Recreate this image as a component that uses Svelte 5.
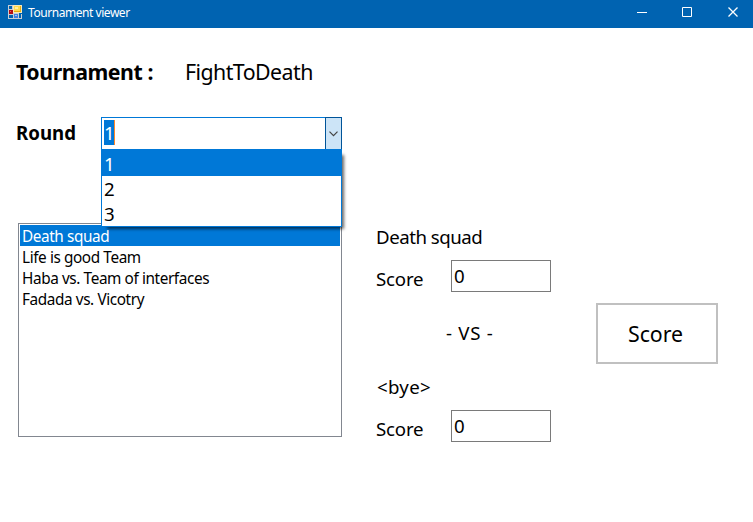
<script>
  const rounds = ['1', '2', '3'];
  const matchups = ['Death squad', 'Life is good Team', 'Haba vs. Team of interfaces', 'Fadada vs. Vicotry'];
  const selected = 0;
</script>

<div class="window">
  <header>
    <svg class="logo" width="16" height="16" viewBox="0 0 16 16" shape-rendering="crispEdges">
      <path fill="none" stroke="#c9ccd2" d="M1.5 5.500V1.500H5.500V5.500M1.500 5.500H6.500V10.500H1.500ZM1.500 10.500V14.500H6.500M6.500 9.500H11.500V14.500H6.500ZM11.500 14.500H14.500V9.500" />
      <path fill="#f6e9b8" d="M6 1h9v8h-9z" />
      <path fill="#e9ac12" d="M7 2h7v6h-7z" />
      <path fill="#ffd94e" d="M7 2h6v5h-6z" />
      <path fill="#fff0a0" d="M8 3h3v2h-3z" />
      <path fill="#b30c14" d="M2 6h4v4h-4z" />
      <path fill="#e8575a" d="M3 7h1v1h-1z" />
      <path fill="#3f82e0" d="M7 10h4v4h-4z" />
      <path fill="#9cc4ff" d="M8 11h2v1h-2z" />
    </svg>
    <span class="caption">Tournament viewer</span>
    <div class="controls">
      <svg width="46" height="28" viewBox="0 0 46 28"><path d="M21 12.500h10" /></svg>
      <svg width="45" height="28" viewBox="0 0 45 28"><path d="M20.500 7.500h9v9h-9z" /></svg>
      <svg width="46" height="28" viewBox="0 0 46 28"><path d="M21.500 7.500l9 9M30.500 7.500l-9 9" stroke-width="1.3" /></svg>
    </div>
  </header>

  <div class="heading"><b>Tournament :</b><span>FightToDeath</span></div>

  <main>
    <section class="left">
      <div class="round">
        <b>Round</b>
        <div class="combo">
          <span class="value">1</span>
          <div class="arrow">
            <svg width="9" height="6" viewBox="0 0 9 6"><path d="M.5 .7l4 4 4-4" fill="none" stroke="#444" stroke-width="1.2" /></svg>
          </div>
          <div class="menu">
            {#each rounds as r, i}<div class:active={i === selected}>{r}</div>{/each}
          </div>
        </div>
      </div>
      <div class="list">
        {#each matchups as m, i}<div class:active={i === selected}><span>{m}</span></div>{/each}
      </div>
    </section>

    <section class="match">
      <div class="team">Death squad</div>
      <div class="score"><span>Score</span><div class="box">0</div></div>
      <div class="vs">- VS -</div>
      <div class="team bye">&lt;bye&gt;</div>
      <div class="score"><span>Score</span><div class="box">0</div></div>
    </section>

    <button>Score</button>
  </main>
</div>

<style>
  .window {
    width: 753px;
    height: 522px;
    overflow: hidden;
    background: #fff;
    color: #000;
    font: 18.67px 'Noto Sans', 'Open Sans', sans-serif;
    letter-spacing: -0.024em;
    box-sizing: border-box;
    white-space: nowrap;
  }
  .window :global(*) { box-sizing: border-box; }
  header {
    display: flex;
    height: 28px;
    background: #0063b1;
    color: #fff;
    font-size: 12px;
    line-height: 25px;
    letter-spacing: -0.45px;
  }
  .logo { margin: 4px 5px 0 7px; }
  .controls { margin-left: auto; display: flex; }
  .controls path { fill: none; stroke: #fff; }
  .heading {
    display: flex;
    height: 89px;
    padding-left: 16px;
    font-size: 21.33px;
    line-height: 88px;
    letter-spacing: -0.54px;
  }
  .heading b { width: 169px; letter-spacing: -0.45px; }
  main { display: flex; }
  .left { width: 342px; }
  .round { display: flex; height: 33px; padding-left: 16px; line-height: 32px; }
  .round b { width: 85px; letter-spacing: 0; }
  .combo {
    position: relative;
    display: flex;
    align-items: flex-start;
    width: 241px;
    height: 33px;
    padding: 2px 0 0 2px;
    border: 1px solid #0078d7;
  }
  .value {
    width: 11px;
    height: 25px;
    background: #0078d7;
    color: #fff;
    border-right: 1px solid #ff8728;
    line-height: 25px;
  }
  .arrow {
    display: flex;
    align-items: center;
    justify-content: center;
    width: 17px;
    height: 33px;
    margin: -3px -1px 0 auto;
    border: 1px solid #005499;
    background: #cce4f7;
  }
  .menu {
    position: absolute;
    top: 31px;
    left: -1px;
    width: 241px;
    height: 78px;
    border: 1px solid #0078d7;
    background: #fff;
    box-shadow: 4px 4px 3px -2px rgba(0, 0, 0, 0.6);
    line-height: 25px;
  }
  .menu div { height: 25px; padding-left: 2px; }
  .menu .active { height: 26px; padding-top: 1px; }
  .active { background: #0078d7; color: #fff; }
  .list {
    width: 324px;
    height: 214px;
    margin: 73px 0 0 18px;
    padding: 1px;
    border: 1px solid #828790;
    font-size: 15.33px;
    line-height: 23px;
    letter-spacing: -0.4px;
  }
  .list div { height: 21px; padding-left: 2px; }
  .match { width: 209px; padding: 107px 0 0 34px; }
  .team { height: 26px; line-height: 26px; letter-spacing: -0.48px; }
  .score { display: flex; height: 32px; margin-top: 10px; line-height: 38px; }
  .score span { width: 75px; letter-spacing: -0.2px; }
  .box { width: 100px; height: 32px; padding-left: 2px; border: 1px solid #7a7a7a; line-height: 30px; }
  .vs { height: 26px; margin: 28px 0; padding-left: 70px; line-height: 26px; letter-spacing: 0.7px; }
  .bye { padding-left: 1px; letter-spacing: 0.3px; }
  button {
    width: 122px;
    height: 61px;
    margin: 186px 0 0 45px;
    padding: 0 3px 0 0;
    border: 2px solid #c0c0c0;
    background: #fff;
    color: #000;
    font: 21.33px 'Noto Sans', 'Open Sans', sans-serif;
    letter-spacing: -0.1px;
  }
</style>
